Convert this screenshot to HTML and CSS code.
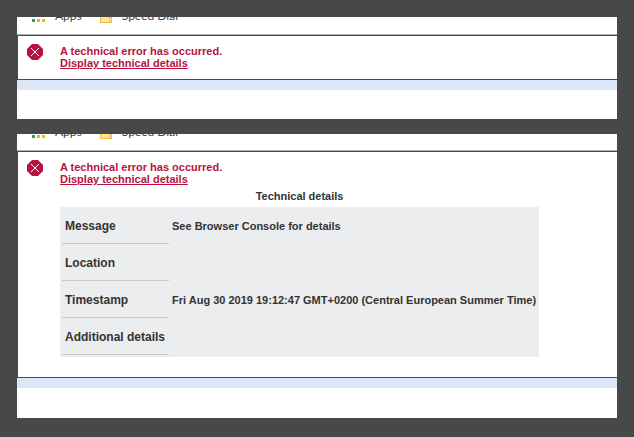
FILE: index.html
```
<!DOCTYPE html>
<html lang="en">
<head>
    <meta charset="UTF-8">
    <meta name="viewport" content="width=device-width, initial-scale=1.0">
    <title>Technical error</title>
    <link rel="stylesheet" href="styles.css">
</head>
<body>
    <section class="panel">
        <nav class="bookmarks">
            <a class="bookmark bookmark-apps" href="#">
                <svg class="apps-icon" width="14" height="14" viewBox="0 0 14 14" shape-rendering="crispEdges" aria-hidden="true">
                    <path fill="#dd4b39" d="M0 1h3v3H0zM5 1h3v3H5z"/>
                    <path fill="#2f9e5b" d="M10 1h3v3h-3zM0 6h3v3H0zM0 11h3v3H0z"/>
                    <path fill="#4285f4" d="M5 6h3v3H5z"/>
                    <path fill="#ffb000" d="M10 6h3v3h-3zM5 11h3v3H5zM10 11h3v3h-3z"/>
                </svg>
                Apps
            </a>
            <a class="bookmark" href="#">
                <svg class="folder-icon" width="12" height="14" viewBox="0 0 12 14" shape-rendering="crispEdges" aria-hidden="true">
                    <path fill="#ffe693" stroke="#e8c23f" d="M.5.5h8v3h3v10H.5z"/>
                    <path fill="none" stroke="#e8c23f" d="M11 8.5H9.5v5"/>
                </svg>
                Speed Dial
            </a>
        </nav>
        <div class="error-box">
            <svg class="error-icon" width="16" height="16" viewBox="0 0 16 16" aria-hidden="true">
                <path fill="#b8123e" d="M5 0h6l5 5v6l-5 5H5l-5-5V5z"/>
                <path stroke="#fff" stroke-width="1" d="M4 4l8 8M12 4l-8 8"/>
            </svg>
            <div class="error-content">
                <p>A technical error has occurred.</p>
                <p><a class="details-link" href="#">Display technical details</a></p>
            </div>
        </div>
        <div class="strip"></div>
    </section>

    <section class="panel">
        <nav class="bookmarks bookmarks-short">
            <a class="bookmark bookmark-apps" href="#">
                <svg class="apps-icon" width="14" height="14" viewBox="0 0 14 14" shape-rendering="crispEdges" aria-hidden="true">
                    <path fill="#dd4b39" d="M0 1h3v3H0zM5 1h3v3H5z"/>
                    <path fill="#2f9e5b" d="M10 1h3v3h-3zM0 6h3v3H0zM0 11h3v3H0z"/>
                    <path fill="#4285f4" d="M5 6h3v3H5z"/>
                    <path fill="#ffb000" d="M10 6h3v3h-3zM5 11h3v3H5zM10 11h3v3h-3z"/>
                </svg>
                Apps
            </a>
            <a class="bookmark" href="#">
                <svg class="folder-icon" width="12" height="14" viewBox="0 0 12 14" shape-rendering="crispEdges" aria-hidden="true">
                    <path fill="#ffe693" stroke="#e8c23f" d="M.5.5h8v3h3v10H.5z"/>
                    <path fill="none" stroke="#e8c23f" d="M11 8.5H9.5v5"/>
                </svg>
                Speed Dial
            </a>
        </nav>
        <div class="error-box error-box-open">
            <svg class="error-icon" width="16" height="16" viewBox="0 0 16 16" aria-hidden="true">
                <path fill="#b8123e" d="M5 0h6l5 5v6l-5 5H5l-5-5V5z"/>
                <path stroke="#fff" stroke-width="1" d="M4 4l8 8M12 4l-8 8"/>
            </svg>
            <div class="error-content">
                <p>A technical error has occurred.</p>
                <p><a class="details-link" href="#">Display technical details</a></p>
                <table class="details">
                    <caption>Technical details</caption>
                    <tbody>
                        <tr>
                            <th scope="row">Message</th>
                            <td>See Browser Console for details</td>
                        </tr>
                        <tr>
                            <th scope="row">Location</th>
                            <td></td>
                        </tr>
                        <tr>
                            <th scope="row">Timestamp</th>
                            <td>Fri Aug 30 2019 19:12:47 GMT+0200 (Central European Summer Time)</td>
                        </tr>
                        <tr>
                            <th scope="row">Additional details</th>
                            <td></td>
                        </tr>
                    </tbody>
                </table>
            </div>
        </div>
        <div class="strip"></div>
    </section>
</body>
</html>
```

FILE: styles.css
```
* {
    margin: 0;
    padding: 0;
    box-sizing: border-box;
}

body {
    display: flex;
    flex-direction: column;
    gap: 15px;
    padding: 17px;
    background: #484848;
    font-family: "Liberation Sans", Arial, sans-serif;
    font-size: 11px;
    font-weight: bold;
    line-height: 12px;
    color: #333;
}

.panel {
    background: #fff;
    padding-bottom: 29px;
}

.panel + .panel {
    padding-bottom: 30px;
}

/* bookmarks bar, only its lower edge is visible */
.bookmarks {
    display: flex;
    align-items: flex-end;
    gap: 18px;
    height: 18px;
    padding: 0 15px 10px;
    overflow: hidden;
    border-bottom: 1px solid #b0b0b0;
    font-family: Lato, "Open Sans", sans-serif;
    font-size: 12px;
    font-weight: normal;
    line-height: 16px;
}

.bookmarks-short {
    height: 17px;
}

.bookmark {
    display: flex;
    align-items: flex-end;
    gap: 10px;
    color: #444;
    text-decoration: none;
}

.bookmark-apps {
    gap: 9px;
}

.apps-icon {
    margin-bottom: 2px;
}

.folder-icon {
    margin-bottom: 1px;
}

/* error message */
.error-box {
    display: flex;
    gap: 17px;
    padding: 8px 9px 10px;
    border: 1px solid #b8123e;
    border-right: none;
}

.error-box-open {
    padding-bottom: 20px;
}

.error-icon {
    flex: none;
}

.error-content {
    padding-top: 1px;
    color: #b8123e;
}

.details-link {
    color: #b8123e;
    text-decoration: underline;
}

.details {
    border-spacing: 2px;
    background: #ebedee;
    color: #333;
}

.details caption {
    line-height: 22px;
    background: #fff;
}

.details th,
.details td {
    height: 35px;
    text-align: left;
    white-space: nowrap;
}

.details th {
    padding: 0 4px 0 3px;
    border-bottom: 1px solid #c8c9ca;
    font-size: 12px;
}

.details td {
    padding: 0 1px 2px;
}

.strip {
    height: 10px;
    background: #dbe6f8;
}
```
